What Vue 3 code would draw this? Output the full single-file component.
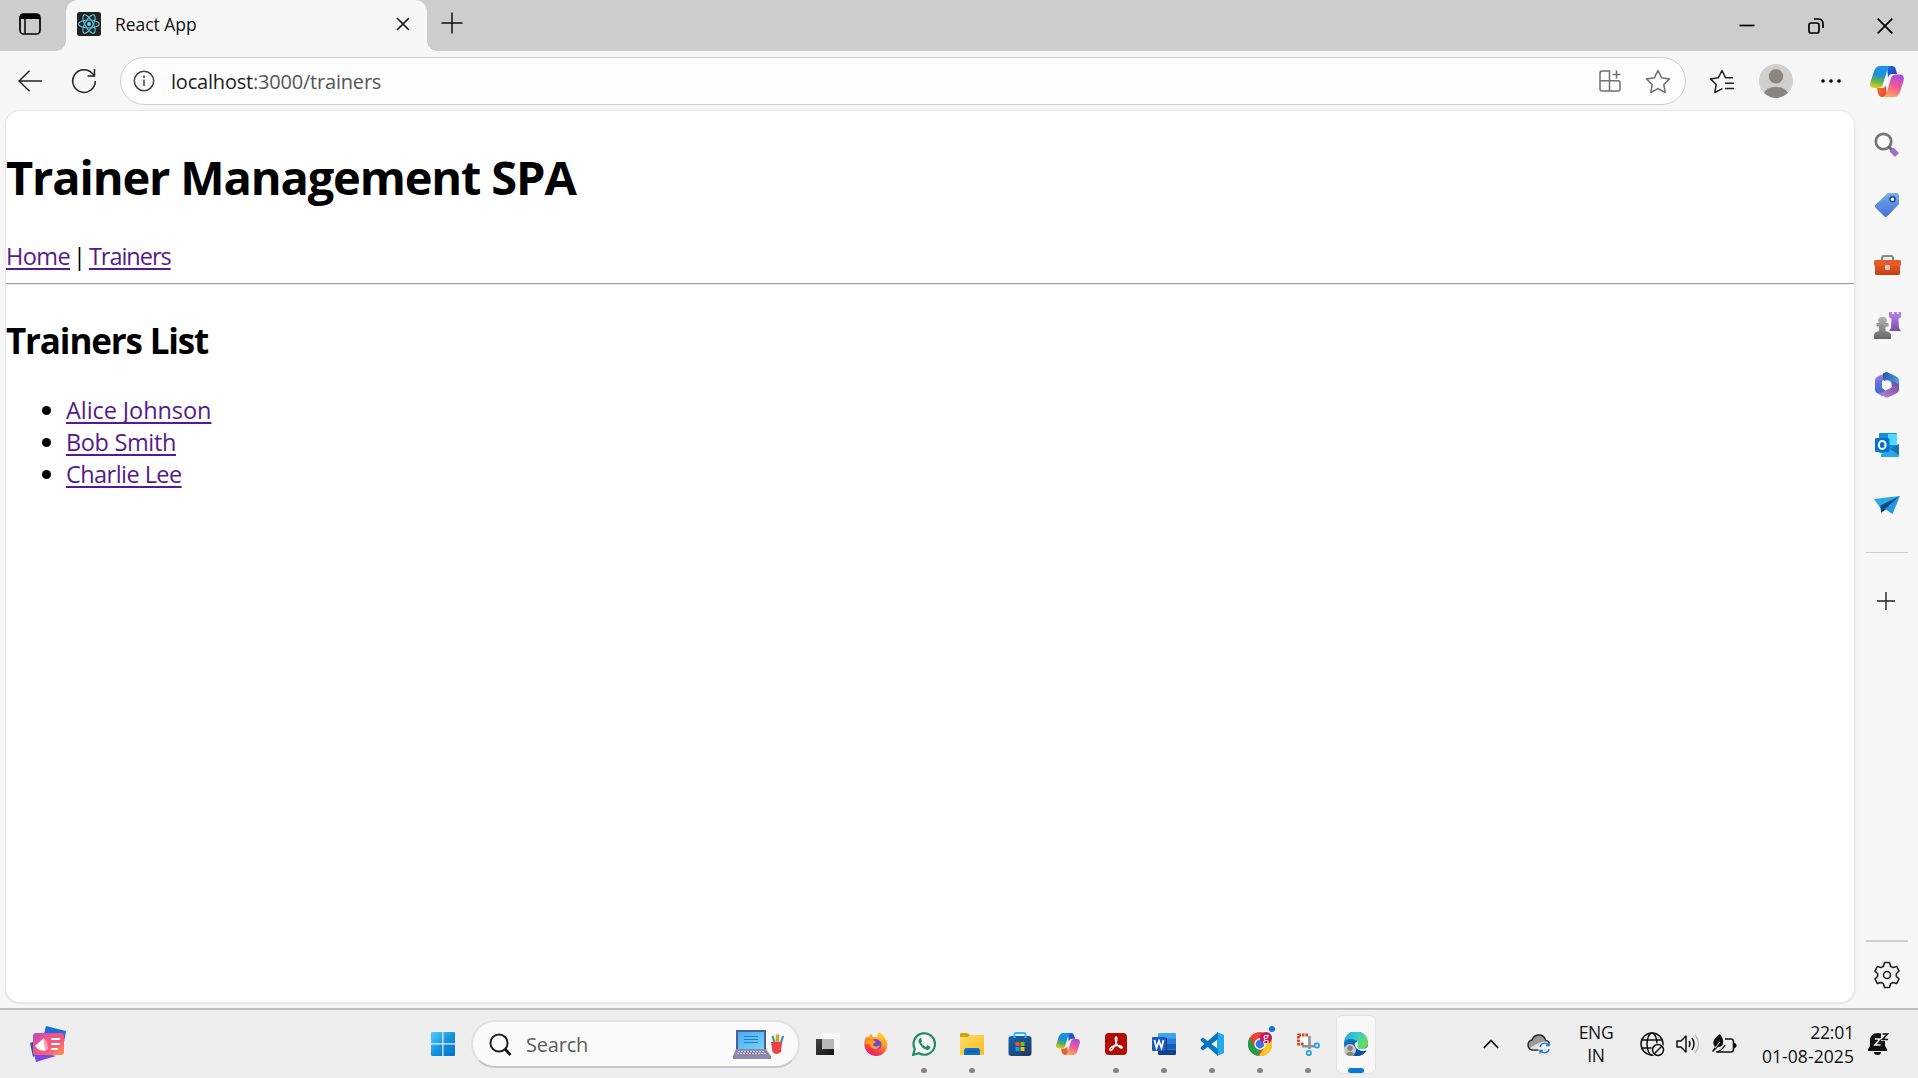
<script setup>
const trainers = [
  { name: 'Alice Johnson', ls: '-0.07px' },
  { name: 'Bob Smith', ls: '-0.35px' },
  { name: 'Charlie Lee', ls: '-0.55px' },
]
</script>

<template>
  <div class="desktop">
    <svg class="defs" width="0" height="0">
      <defs>
        <linearGradient id="cpBlue" x1="0.3" y1="0" x2="0.1" y2="1"><stop offset="0" stop-color="#1595ee" /><stop offset=".35" stop-color="#1c8fd8" /><stop offset=".65" stop-color="#5cb455" /><stop offset="1" stop-color="#f5cf10" /></linearGradient>
        <linearGradient id="cpPink" x1=".8" y1="0" x2=".4" y2="1"><stop offset="0" stop-color="#a04ee8" /><stop offset=".5" stop-color="#ee5797" /><stop offset="1" stop-color="#ffa45c" /></linearGradient>
        <linearGradient id="cpDark" x1="0" y1="0" x2="1" y2="1"><stop offset="0" stop-color="#1668d8" /><stop offset="1" stop-color="#2340b8" /></linearGradient>
        <linearGradient id="cpRed" x1="0" y1="0" x2="1" y2="1"><stop offset="0" stop-color="#f8742c" /><stop offset="1" stop-color="#e5453f" /></linearGradient>
        <linearGradient id="win" x1="0" y1="0" x2="1" y2="1"><stop offset="0" stop-color="#4fd0fa" /><stop offset=".5" stop-color="#1793dd" /><stop offset="1" stop-color="#0070cc" /></linearGradient>
        <linearGradient id="purple" x1="0" y1="0" x2="0" y2="1"><stop offset="0" stop-color="#bd83ef" /><stop offset="1" stop-color="#7650a8" /></linearGradient>
        <linearGradient id="grey" x1="0" y1="0" x2="0" y2="1"><stop offset="0" stop-color="#b5b5b5" /><stop offset="1" stop-color="#666" /></linearGradient>
        <linearGradient id="tag" x1="0" y1="0" x2="0" y2="1"><stop offset="0" stop-color="#78adf0" /><stop offset="1" stop-color="#4170d2" /></linearGradient>
        <linearGradient id="tool" x1="0" y1="0" x2="0" y2="1"><stop offset="0" stop-color="#ee632d" /><stop offset="1" stop-color="#c7400e" /></linearGradient>
        <linearGradient id="mA" x1="0" y1="0" x2="0" y2="1"><stop offset="0" stop-color="#b878df" /><stop offset=".6" stop-color="#4c74dc" /><stop offset="1" stop-color="#3f68d6" /></linearGradient>
        <linearGradient id="mB" x1="0" y1="0" x2="1" y2="1"><stop offset="0" stop-color="#234ea8" /><stop offset="1" stop-color="#52c0f6" /></linearGradient>
        <linearGradient id="mC" x1="0" y1="1" x2="1" y2="0"><stop offset="0" stop-color="#c786d8" /><stop offset="1" stop-color="#674aa3" /></linearGradient>
        <linearGradient id="news" x1="0" y1="0" x2="1" y2="1"><stop offset="0" stop-color="#b34dd0" /><stop offset=".35" stop-color="#f15289" /><stop offset=".65" stop-color="#f75b78" /><stop offset="1" stop-color="#ff984a" /></linearGradient>
        <linearGradient id="folder" x1="0" y1="0" x2="1" y2="1"><stop offset="0" stop-color="#ffdf70" /><stop offset="1" stop-color="#fbb917" /></linearGradient>
        <linearGradient id="store" x1="0" y1="0" x2="1" y2="1"><stop offset="0" stop-color="#1266b0" /><stop offset="1" stop-color="#24375e" /></linearGradient>
        <linearGradient id="fox" x1=".8" y1="0" x2=".3" y2="1"><stop offset="0" stop-color="#ffe52c" /><stop offset=".45" stop-color="#ff9522" /><stop offset=".75" stop-color="#fb3b42" /><stop offset="1" stop-color="#e21878" /></linearGradient>
        <linearGradient id="edgeTop" x1="0" y1="0" x2="1" y2=".5"><stop offset="0" stop-color="#20a4df" /><stop offset=".5" stop-color="#33c9d0" /><stop offset="1" stop-color="#66df55" /></linearGradient>
        <linearGradient id="edgeLow" x1="0" y1="0" x2="1" y2="1"><stop offset="0" stop-color="#1379cf" /><stop offset="1" stop-color="#0c4f93" /></linearGradient>
        <linearGradient id="screen" x1="0" y1="0" x2="1" y2="1"><stop offset="0" stop-color="#49aef0" /><stop offset="1" stop-color="#75d3fb" /></linearGradient>
        <linearGradient id="dark" x1="0" y1="0" x2="1" y2="1"><stop offset="0" stop-color="#444" /><stop offset="1" stop-color="#111" /></linearGradient>
        <symbol id="copilot" viewBox="0 0 34 31">
          <path d="M17 0H22Q25 0 26 4L27 8H22Q19 8 18 12Z" fill="url(#cpDark)" />
          <path d="M17 31H12Q9 31 8 27L7 22H12Q15 22 16 19Z" fill="url(#cpRed)" />
          <path d="M10 0H21Q18 1 17 5L13 18Q12 22 8 22H4Q-1 22 .5 16L4 5Q6 0 10 0Z" fill="url(#cpBlue)" />
          <path d="M24 31H12Q16 30 17 26L21 12Q22 8.500 26 8.500H30Q35 9 33.500 15L30 26Q28 31 24 31Z" fill="url(#cpPink)" />
        </symbol>
      </defs>
    </svg>

    <header class="tabstrip">
      <svg class="tab-actions" width="22" height="22" viewBox="0 0 22 22"><rect x="1" y="1" width="20" height="20" rx="3.500" fill="none" stroke="#000" stroke-width="1.700" /><path d="M1 6V4Q1 1 4 1H18Q21 1 21 4V6Z" fill="#000" /><path d="M6 6V21" stroke="#000" stroke-width="1.500" /></svg>
      <div class="tab">
        <svg width="24" height="24" viewBox="0 0 24 24"><rect width="24" height="24" rx="2.500" fill="#222" /><g fill="none" stroke="#54c3dc" stroke-width="1.150"><ellipse cx="12" cy="12" rx="10.300" ry="4" /><ellipse cx="12" cy="12" rx="10.300" ry="4" transform="rotate(60 12 12)" /><ellipse cx="12" cy="12" rx="10.300" ry="4" transform="rotate(120 12 12)" /></g><circle cx="12" cy="12" r="2" fill="#61dafb" /></svg>
        <span class="tab-title">React App</span>
        <svg class="tab-close" width="14" height="14" viewBox="0 0 14 14"><path d="M1 1L13 13M13 1L1 13" stroke="#111" stroke-width="1.600" /></svg>
      </div>
      <svg class="new-tab" width="22" height="22" viewBox="0 0 22 22"><path d="M11 .5V21.500M.5 11H21.500" stroke="#111" stroke-width="1.500" /></svg>
      <div class="window-controls">
        <svg width="16" height="16" viewBox="0 0 16 16"><path d="M.5 7.500H15.500" stroke="#000" stroke-width="1.700" /></svg>
        <svg width="16" height="16" viewBox="0 0 16 16"><rect x="1" y="5" width="10" height="10" rx="2" fill="none" stroke="#000" stroke-width="1.700" /><path d="M6 1H10Q15 1 15 6V10" fill="none" stroke="#000" stroke-width="1.700" /></svg>
        <svg width="16" height="16" viewBox="0 0 16 16"><path d="M.7 .7L15.300 15.300M15.300 .7L.7 15.300" stroke="#000" stroke-width="1.700" /></svg>
      </div>
    </header>

    <div class="toolbar">
      <svg class="back" width="24" height="22" viewBox="0 0 24 22"><path d="M24 11H1M11.500 .7L1 11L11.500 21.300" fill="none" stroke="#222" stroke-width="1.500" /></svg>
      <svg class="reload" width="26" height="26" viewBox="0 0 26 26"><path d="M24.300 13A11.300 11.300 0 1 1 21.500 5.600L23.500 8M23.500 1V8H16.500" fill="none" stroke="#222" stroke-width="1.500" /></svg>
      <div class="address">
        <svg class="info" width="22" height="22" viewBox="0 0 22 22"><circle cx="11" cy="11" r="9.700" fill="none" stroke="#444" stroke-width="1.500" /><path d="M11 9.500V16" stroke="#444" stroke-width="1.500" /><circle cx="11" cy="6.700" r="1.100" fill="#444" /></svg>
        <span class="url">localhost<span>:3000/trainers</span></span>
        <svg class="apps" width="22" height="22" viewBox="0 0 22 22"><path d="M1 10.700V3Q1 1 3 1H10.500V21H3Q1 21 1 19V10.700H19Q21 10.700 21 13V19Q21 21 19 21H10.500M17.500 .5V8.500M13.500 4.500H21.500" fill="none" stroke="#707070" stroke-width="1.500" /></svg>
        <svg class="star" width="26" height="25" viewBox="0 0 26 25"><path d="M13 1.500L16.600 8.700L24.600 9.900L18.800 15.500L20.200 23.500L13 19.700L5.800 23.500L7.200 15.500L1.400 9.900L9.400 8.700Z" fill="none" stroke="#707070" stroke-width="1.500" stroke-linejoin="round" /></svg>
      </div>
      <svg class="favs" width="26" height="25" viewBox="0 0 26 25"><path d="M24 8.800H16.600L13 1.500L9.400 8.700L1.400 9.900L7.200 15.500L5.800 23.500L13.500 19.700M16 14.300H25M16 19.500H25" fill="none" stroke="#222" stroke-width="1.500" stroke-linejoin="round" /></svg>
      <svg class="avatar" width="34" height="34" viewBox="0 0 34 34"><circle cx="17" cy="17" r="17" fill="#d2d0ce" /><circle cx="17" cy="12.300" r="7.200" fill="#8a8684" /><path d="M5 29A13 10 0 0 1 29 29Q17 39 5 29Z" fill="#8a8684" /></svg>
      <svg class="more" width="20" height="4" viewBox="0 0 20 4"><circle cx="2" cy="2" r="1.800" /><circle cx="10" cy="2" r="1.800" /><circle cx="18" cy="2" r="1.800" /></svg>
      <svg class="copilot" width="34" height="31"><use href="#copilot" /></svg>
    </div>

    <div class="body">
      <main class="page">
        <h1>Trainer Management SPA</h1>
        <nav><a class="home">Home</a><span class="bar">|</span><a class="trn">Trainers</a></nav>
        <hr>
        <h2>Trainers List</h2>
        <ul>
          <li v-for="t in trainers" :key="t.name"><a :style="{ letterSpacing: t.ls }">{{ t.name }}</a></li>
        </ul>
      </main>
      <aside>
        <div class="slot"><svg width="26" height="26" viewBox="0 0 26 26"><circle cx="9.500" cy="9.500" r="7.700" fill="#fafafa" stroke="#777" stroke-width="2.800" /><path d="M15 15L18 18" stroke="#666" stroke-width="3" /><path d="M17.500 17.500L23 23" stroke="#a66bd2" stroke-width="5.500" /></svg></div>
        <div class="slot"><svg width="26" height="26" viewBox="0 0 26 26"><path d="M14 1H22Q25 1 25 4V12L14 23.500Q12 26 10 24L1.800 16Q0 14 1.800 12.500Z" fill="url(#tag)" /><circle cx="18.500" cy="7.300" r="2.500" fill="#fff" stroke="#28489b" stroke-width="1.500" /></svg></div>
        <div class="slot"><svg width="27" height="22" viewBox="0 0 27 22"><path d="M8 7V4Q8 2 10 2H17Q19 2 19 4V7" fill="none" stroke="#888" stroke-width="2" /><rect x="1" y="6" width="25" height="15" rx="1.500" fill="url(#tool)" /><rect y="6" width="27" height="6" rx="1.500" fill="#e85b27" /><rect x="11" y="11" width="5" height="5" rx="1" fill="#c9c9c9" /></svg></div>
        <div class="slot"><svg width="27" height="28" viewBox="0 0 27 28"><path d="M15 1H18V3H20V1H23V3H24.500V1H27V6L24.500 8L25 17L27 20H15L17 17L17.500 8L15 6Z" fill="url(#purple)" /><path d="M4 9A4.700 4.700 0 0 1 13 9L12 12H14.500V15.500H11.500V20Q17 21 17 24V28H0V24Q0 21 5 20V15.500H2.500V12H5Z" fill="url(#grey)" /></svg></div>
        <div class="slot"><svg width="24" height="26" viewBox="0 0 24 26"><path d="M12 0L2 5Q0 6 0 9V18Q0 20 2 21L7 24L11 19L7 16V9L15 2Z" fill="url(#mA)" /><path d="M12 0L22 5Q24 6 24 9V17Q23 19 22 17L8 8V1.500Q11 0 12 0Z" fill="url(#mB)" /><path d="M24 10V18Q24 20 22 21L14 25Q12 26 10 25L2 21Q4 22 8 20L17 15V8L23 12Z" fill="url(#mC)" /><circle cx="12" cy="12.800" r="4.500" fill="#f7f7f7" /></svg></div>
        <div class="slot"><svg width="24" height="24" viewBox="0 0 24 24"><rect x="4" width="18" height="20" rx="1" fill="#1490df" /><path d="M13 1H22V12H13Z" fill="#50d9ff" /><path d="M4 10H14V19H4Z" fill="#0a5ba8" /><path d="M6 24H23Q24 24 24 23V11L6 21Z" fill="#28a8ea" /><path d="M15 16L24 22V11Z" fill="#1672b5" /><rect y="5" width="14.500" height="14" rx="1.500" fill="#0672cb" /><ellipse cx="7.200" cy="12" rx="3.400" ry="3.900" fill="none" stroke="#fff" stroke-width="2" /></svg></div>
        <div class="slot"><svg width="26" height="18" viewBox="0 0 26 18"><path d="M0 3L26 0L7 13Z" fill="#2aa9e5" /><path d="M26 0L6.500 9.500L7 17L11 14Z" fill="#104a86" /><path d="M26 0L11 13L18.500 18Z" fill="#219be0" /></svg></div>
        <div class="rule first"></div>
        <svg class="add" width="20" height="20" viewBox="0 0 20 20"><path d="M10 1V19M1 10H19" stroke="#222" stroke-width="1.400" /></svg>
        <div class="rule second"></div>
        <svg class="gear" width="26" height="28" viewBox="0 0 26 28"><path d="M10.500 1.500H15.500L16.500 5.200L19 6.600L22.700 5.600L25 10L22.300 12.700V15.300L25 18L22.700 22.400L19 21.400L16.500 22.800L15.500 26.500H10.500L9.500 22.800L7 21.400L3.300 22.400L1 18L3.700 15.300V12.700L1 10L3.300 5.600L7 6.600L9.500 5.200Z" fill="none" stroke="#222" stroke-width="1.600" stroke-linejoin="round" /><circle cx="13" cy="14" r="3.500" fill="none" stroke="#222" stroke-width="1.600" /></svg>
      </aside>
    </div>

    <footer class="taskbar">
      <svg class="news" width="37" height="37" viewBox="0 0 37 37"><path d="M16 0L36 5L33 22L12 16Z" fill="#176fdc" /><path d="M0 17L6 15L8 27L3 31Z" fill="#1c62b5" /><path d="M3 24L26 30L6 36Z" fill="#7748f0" /><rect x="3" y="7" width="31" height="22" rx="3" fill="url(#news)" /><path d="M5 20L14 12L16 25L9 24Z" fill="#fff" /><path d="M13 12Q18 13 18 24L15 24Z" fill="#ff9fb8" /><path d="M21 13H30M21 18H30M21 23H28" stroke="#fff" stroke-width="2" /></svg>
      <svg class="start" width="24" height="24" viewBox="0 0 24 24"><path d="M1 0H11.300V11.300H0V1Q0 0 1 0ZM12.500 0H23Q24 0 24 1V11.300H12.500ZM0 12.500H11.300V24H1Q0 24 0 23ZM12.500 12.500H24V23Q24 24 23 24H12.500Z" fill="url(#win)" /></svg>
      <div class="search">
        <svg width="23" height="23" viewBox="0 0 23 23"><circle cx="10" cy="10" r="8.600" fill="none" stroke="#222" stroke-width="2" /><path d="M16 16L21.500 22" stroke="#111" stroke-width="2.800" /></svg>
        <span>Search</span>
        <svg class="laptop" width="51" height="29" viewBox="0 0 51 29"><path d="M3 0H33V20H3Z" fill="#4f5d99" /><rect x="5" y="2" width="26" height="17" fill="url(#screen)" /><path d="M11 6.500H25M11 9.500H25M11 12.500H25" stroke="#2a7fbd" stroke-width="1" /><path d="M3 19H33L38 26V29H0V26Z" fill="#8d87ab" /><path d="M5 21.500H32M4 23.500H34" stroke="#d1cedd" stroke-width="1" stroke-dasharray="2 1" /><path d="M44.500 14V4.500" stroke="#d5a032" stroke-width="3.500" /><path d="M42 14L39.500 6" stroke="#2da56e" stroke-width="2.200" /><path d="M47.500 14L50 6" stroke="#3489d1" stroke-width="2.200" /><path d="M38 12H49L48 22Q43 26 39.500 22Z" fill="#e84348" /></svg>
      </div>
      <div class="apps-row">
        <div class="app"><svg width="24" height="24" viewBox="0 0 24 24"><rect y="7" width="18" height="16" fill="url(#dark)" /><rect x="6" y="1" width="18" height="16" fill="#f8f8f8" /><rect x="6" y="7" width="12" height="10" fill="#b9b9b9" /></svg></div>
        <div class="app"><svg width="24" height="24" viewBox="0 0 24 24"><path d="M15.500 0Q22 5 23.500 12A11.500 11.500 0 0 1 .5 13Q0 7 3 4L4 6Q6 3 7 1.500L9 5Q13 5 13 5Q13 2 15.500 0Z" fill="url(#fox)" /><path d="M8 8Q13 5 17 10Q19 17 12 18Q7 18 7 12L12 10Z" fill="#7646d6" /><path d="M1 12Q3 7 9 8L12 10Q9 11 9 13Q12 16 16 13Q15 18 10 17Q6 16 6 12Z" fill="#ff9d21" /></svg></div>
        <div class="app on"><svg width="24" height="24" viewBox="0 0 24 24"><path d="M1.200 22.800L2.800 17A10.700 10.700 0 1 1 7 21.300Z" fill="#f5f5f5" stroke="#1e8d5b" stroke-width="2.200" /><path d="M8 6Q5 9 8 12.500Q11 17 15 18Q18 18 18.500 15L15.500 13L14 15Q10.500 13.500 9 10.500L10 9L9 6Z" fill="#1e8d5b" /></svg></div>
        <div class="app on"><svg width="24" height="22" viewBox="0 0 24 22"><path d="M0 1Q0 0 1 0H7L10 2H23Q24 2 24 3V10H0Z" fill="#dba10e" /><path d="M0 4H8L10 2H24V21Q24 22 23 22H1Q0 22 0 21Z" fill="url(#folder)" /><path d="M4 22V18Q4 15 7 15H17Q20 15 20 18V22Z" fill="#0c70c6" /><path d="M7 18.500H17" stroke="#064c95" stroke-width="1.300" /></svg></div>
        <div class="app"><svg width="24" height="24" viewBox="0 0 24 24"><rect x=".5" y="4" width="23" height="20" rx="3" fill="url(#store)" /><path d="M6.500 6V2Q6.500 1 8 1H16Q17.500 1 17.500 2V6" fill="none" stroke="#36b7ee" stroke-width="2" /><path d="M7.500 10H11.500V14H7.500Z" fill="#f35325" /><path d="M12.500 10H16.500V14H12.500Z" fill="#81bc06" /><path d="M7.500 15H11.500V19H7.500Z" fill="#05a6f0" /><path d="M12.500 15H16.500V19H12.500Z" fill="#ffba08" /></svg></div>
        <div class="app"><svg width="24" height="22"><use href="#copilot" /></svg></div>
        <div class="app on"><svg width="22" height="22" viewBox="0 0 22 22"><rect width="22" height="22" rx="4" fill="#b30b00" /><path d="M5 17Q4 15 9 13Q12 12 16 13Q19 15 16 15Q12 13 10.500 8Q10 4 11 4Q13 5 11 10Q8 17 5.500 17.500Z" fill="none" stroke="#fff" stroke-width="1.400" /></svg></div>
        <div class="app on"><svg width="24" height="22" viewBox="0 0 24 22"><path d="M6 1Q6 0 7 0H23Q24 0 24 1V6H6Z" fill="#41a5ee" /><path d="M6 5.500H24V11H6Z" fill="#2b7cd3" /><path d="M6 11H24V16.500H6Z" fill="#185abd" /><path d="M6 16.500H24V21Q24 22 23 22H7Q6 22 6 21Z" fill="#103f91" /><path d="M6 5H15V19H6Z" fill="#123c7b" /><rect y="4" width="14" height="14" rx="1" fill="#185abd" /><path d="M2.500 7L4.500 15L7 8L9.500 15L11.500 7" fill="none" stroke="#fff" stroke-width="1.800" /></svg></div>
        <div class="app on"><svg width="24" height="24" viewBox="0 0 24 24"><path d="M17 0L24 3V21L17 24Z" fill="#24a8ee" /><path d="M1 7L3 5.500L18 17V24L1 9Q0 8 1 7Z" fill="#0879c4" /><path d="M1 17L3 18.500L18 7V0L1 15Q0 16 1 17Z" fill="#0874bb" /></svg></div>
        <div class="app on chrome"><svg width="24" height="24" viewBox="0 0 24 24"><circle cx="12" cy="12" r="12" fill="#e74335" /><path d="M1.600 6L7 15L12 17L10.800 24A12 12 0 0 1 1.600 6Z" fill="#249d48" /><path d="M12 6.500H22.700A12 12 0 0 1 11 24L17 14Z" fill="#fcc624" /><circle cx="12" cy="12" r="5.700" fill="#fff" /><circle cx="12" cy="12" r="4.400" fill="#3177e5" /><circle cx="18" cy="6" r="6" fill="#c2185b" /></svg><span class="profile">g</span><span class="badge"></span></div>
        <div class="app on"><svg width="24" height="24" viewBox="0 0 24 24"><path d="M2 2H12V13H2Z" fill="#fff" /><path d="M12 3H2.500V12H8" fill="none" stroke="#d84613" stroke-width="2.800" stroke-dasharray="2.600 .9" /><path d="M13.500 4V17M6 14.300H18" stroke="#8d9298" stroke-width="2.600" /><circle cx="20.800" cy="13.500" r="2.200" fill="#fff" stroke="#179be0" stroke-width="1.700" /><circle cx="12.800" cy="21" r="2.200" fill="#fff" stroke="#179be0" stroke-width="1.700" /></svg></div>
        <div class="app active"><svg width="24" height="24" viewBox="0 0 24 24"><circle cx="12" cy="12" r="12" fill="url(#edgeLow)" /><path d="M0 11A12 12 0 0 1 24 11Q24 16 18 17Q13 17 14 14Q14 7 7 7Q2 7 0 11Z" fill="url(#edgeTop)" /><path d="M10.500 12Q12 9 14 10.500Q14 12 13.500 14Q13.500 17 18 17Q22 17 24 14V17L22.500 19Q12 20 10.500 12Z" fill="#f4f8fb" /><path d="M9.500 11Q8 18 15 20Q20 20 22.500 18Q19 25 11 24Q4 20 9.500 11Z" fill="#0d5199" /><circle cx="6" cy="18" r="6" fill="#cbc9c7" /><circle cx="6" cy="16.200" r="2.700" fill="#858280" /><path d="M1.800 22Q6 17 10.200 22Q6 26 1.800 22Z" fill="#858280" /></svg></div>
      </div>
      <svg class="chev" width="16" height="10" viewBox="0 0 16 10"><path d="M.8 9L8 1.500L15.200 9" fill="none" stroke="#111" stroke-width="1.800" /></svg>
      <svg class="cloud" width="24" height="20" viewBox="0 0 24 20"><path d="M5 16Q1 15 1 11Q1 7 5 6Q7 1 12 1Q17 1 18.500 6Q22 7 22.500 10V16Z" fill="#999" stroke="#222" stroke-width="1.300" /><path d="M3 14Q13 6 21 9V15.300H5Z" fill="#ddd" /><circle cx="17.500" cy="14" r="6.500" fill="#eee" /><path d="M12.800 13A5 5 0 0 1 21.500 11M22.200 15A5 5 0 0 1 13.500 17M22 8.500V11.500H19M13 19.500V16.500H16" fill="none" stroke="#1976cb" stroke-width="1.300" /></svg>
      <div class="lang"><span>ENG</span><span>IN</span></div>
      <svg class="globe" width="25" height="25" viewBox="0 0 25 25"><g fill="none" stroke="#111" stroke-width="1.500"><circle cx="12" cy="12" r="11" /><ellipse cx="12" cy="12" rx="5" ry="11" /><path d="M2 8H22M2 16H12" /></g><circle cx="18" cy="18" r="7" fill="#eee" /><circle cx="18" cy="18" r="5.500" fill="none" stroke="#111" stroke-width="1.500" /><path d="M14.500 21.500L21.500 14.500" stroke="#111" stroke-width="1.500" /></svg>
      <svg class="speaker" width="24" height="20" viewBox="0 0 24 20"><path d="M1 7H5L10 2V18L5 13H1Z" fill="none" stroke="#111" stroke-width="1.500" stroke-linejoin="round" /><path d="M13 7Q15 10 13 13M16 4Q20 10 16 16" fill="none" stroke="#111" stroke-width="1.500" /><path d="M19 1Q26 10 19 19" fill="none" stroke="#bbb" stroke-width="1.500" /></svg>
      <svg class="battery" width="25" height="20" viewBox="0 0 25 20"><path d="M13 5H19Q21.500 5 21.500 8V15Q21.500 18 19 18H5" fill="none" stroke="#111" stroke-width="1.600" /><path d="M22 9Q24.500 9 24.500 11.500Q24.500 14 22 14Z" /><path d="M8 0Q12 5 11 9Q11 13 6 13L1 18L0 17L3 13Q-2 7 8 0Z" fill="#111" /><path d="M3 14L8 8" stroke="#eee" stroke-width="1" /><path d="M4 18Q10 17 13 11" fill="none" stroke="#111" stroke-width="1.300" /></svg>
      <div class="clock"><span class="time">22:01</span><span>01-08-2025</span></div>
      <svg class="bell" width="21" height="24" viewBox="0 0 21 24"><path d="M10 1Q2 1 2 9V14L0 17V19H19V17L17 14V9Q17 1 10 1ZM6 20H13Q13 23 9.500 23Q6 23 6 20Z" fill="#111" /><path d="M7 7H12L7 13H12.500" fill="none" stroke="#eee" stroke-width="1.600" /><rect x="13" y="0" width="8" height="9" fill="#eee" /><path d="M14.500 2H19.500L14.500 7.500H20" fill="none" stroke="#111" stroke-width="1.600" /></svg>
    </footer>
  </div>
</template>

<style>
body { margin: 0; overflow: hidden; }
</style>
<style scoped>
.desktop { width: 1918px; height: 1078px; display: flex; flex-direction: column; background: #f7f7f7; font-family: "Open Sans", "Noto Sans", sans-serif; color: #111; }
svg { display: block; flex: none; }
.defs { position: absolute; }
span, a { white-space: nowrap; }
.tabstrip { height: 51px; flex: none; background: #cdcdcd; display: flex; align-items: center; box-sizing: border-box; }
.tab-actions { margin: 0 25px 3px 19px; }
.tab { width: 361px; height: 51px; box-sizing: border-box; background: #f7f7f7; border-radius: 12px 12px 0 0; display: flex; align-items: center; padding: 0 17px 3px 11px; position: relative; }
.tab::before, .tab::after { content: ""; position: absolute; bottom: 0; width: 10px; height: 10px; }
.tab::before { left: -10px; background: radial-gradient(circle at 0 0, transparent 9.500px, #f7f7f7 10px); }
.tab::after { right: -10px; background: radial-gradient(circle at 100% 0, transparent 9.500px, #f7f7f7 10px); }
.tab-title { margin-left: 14px; font-size: 17.500px; line-height: 24px; letter-spacing: -.05px; color: #111; }
.tab-close { margin-left: auto; }
.new-tab { margin: 0 0 5px 14px; }
.window-controls { margin-left: auto; display: flex; gap: 53px; padding-right: 25px; }
.toolbar { height: 59px; flex: none; display: flex; align-items: center; box-sizing: border-box; padding-top: 1px; }
.back { margin-left: 18px; margin-bottom: 1px; }
.reload { margin-left: 29px; }
.address { margin-left: 23px; width: 1566px; height: 48px; box-sizing: border-box; border: 1.500px solid #cfcfcf; border-radius: 24px; background: #fdfdfd; display: flex; align-items: center; }
.info { margin-left: 12px; }
.url { margin: 2px 0 0 16px; font-size: 20px; line-height: 28px; letter-spacing: -.2px; color: #1c1c1c; }
.url span { color: #555; }
.apps { margin-left: auto; }
.star { margin: 0 14px 0 24px; }
.favs { margin-left: 23px; }
.avatar { margin-left: 24px; }
.more { margin-left: 28px; }
.copilot { margin-left: 29px; }
.body { flex: none; height: 898px; display: flex; }
.page { margin: 1px 0 5px 6px; width: 1848px; height: 891px; border-radius: 14px; background: #fff; box-shadow: 0 0 0 1px #e8e8e8, 0 1px 3px #ccc; color: #000; overflow: hidden; }
h1 { margin: 34px 0 0; font-size: 47px; line-height: 64px; font-weight: 700; letter-spacing: -1.150px; white-space: nowrap; }
nav { margin-top: 32px; height: 32px; display: flex; font-size: 23.500px; line-height: 31px; }
a { color: #551a8b; text-decoration: underline; text-decoration-thickness: 2px; text-underline-offset: 3px; text-decoration-skip-ink: none; }
.home { letter-spacing: -.6px; }
.trn { letter-spacing: -1.030px; }
.bar { margin: 0 3px; }
hr { margin: 10px 0 0; border: 0; height: 1px; background: #9a9a9a; border-bottom: 1px solid #eee; }
h2 { margin: 32px 0 0; font-size: 35px; line-height: 48px; font-weight: 700; letter-spacing: -1.150px; }
ul { margin: 29px 0 0; padding: 0; list-style: none; font-size: 23.500px; }
li { height: 32px; line-height: 32px; display: flex; align-items: center; }
li::before { content: ""; width: 9px; height: 9px; border-radius: 50%; background: #000; margin: 0 15px 0 36px; }
aside { width: 64px; padding-top: 5px; height: 894px; display: flex; flex-direction: column; align-items: center; box-sizing: border-box; }
.slot { height: 60px; flex: none; display: flex; align-items: center; padding-left: 2px; }
.rule { width: 42px; height: 1px; background: #cfcfcf; flex: none; margin-left: 1px; }
.first { margin-top: 17px; }
.add { margin-top: 38px; }
.second { margin-top: auto; height: 2px; }
.gear { margin: 19px 0 15px 2px; }
.taskbar { height: 70px; box-sizing: border-box; border-top: 2px solid #bfbfbf; background: #eee; display: flex; align-items: center; }
.news { margin-left: 30px; }
.start { margin-left: 364px; }
.search { margin-left: 16px; width: 329px; height: 48px; box-sizing: border-box; border: 2px solid #e2e2e2; border-bottom-color: #c8c8c8; border-radius: 24px; background: #fafafa; display: flex; align-items: center; padding: 0 14px 0 16px; }
.search span { margin: 1px 0 0 14px; font-size: 20px; color: #5c5c5c; line-height: 28px; letter-spacing: -.2px; }
.laptop { margin-left: auto; }
.apps-row { display: flex; margin-left: 4px; }
.app { width: 48px; height: 68px; display: flex; align-items: center; justify-content: center; position: relative; }
.app.on::after, .app.active::after { content: ""; position: absolute; bottom: 5px; width: 6px; height: 5px; border-radius: 3px; background: #858585; }
.app.active::after { width: 16px; background: #0a78d4; }
.app.active::before { content: ""; position: absolute; width: 38px; height: 57px; top: 5px; background: #f8f8f8; border: 1px solid #e2e2e2; border-radius: 6px; }
.app svg { position: relative; }
.profile { position: absolute; left: 27px; top: 21px; font-size: 11px; line-height: 12px; color: #fff; }
.badge { position: absolute; left: 33px; top: 16px; width: 6px; height: 6px; border-radius: 50%; background: #0a78d4; }
.chev { margin-left: 103px; }
.cloud { margin-left: 28px; }
.lang { margin-left: 26px; width: 38px; display: flex; flex-direction: column; align-items: center; font-size: 17.500px; line-height: 23px; letter-spacing: -.3px; }
.globe { margin-left: 25px; }
.speaker { margin-left: 11px; }
.battery { margin-left: 12px; }
.clock { margin-left: 17px; width: 100px; display: flex; flex-direction: column; align-items: flex-end; font-size: 17.500px; line-height: 24px; letter-spacing: .08px; }
.time { letter-spacing: -.15px; }
.bell { margin-left: 14px; }
</style>
